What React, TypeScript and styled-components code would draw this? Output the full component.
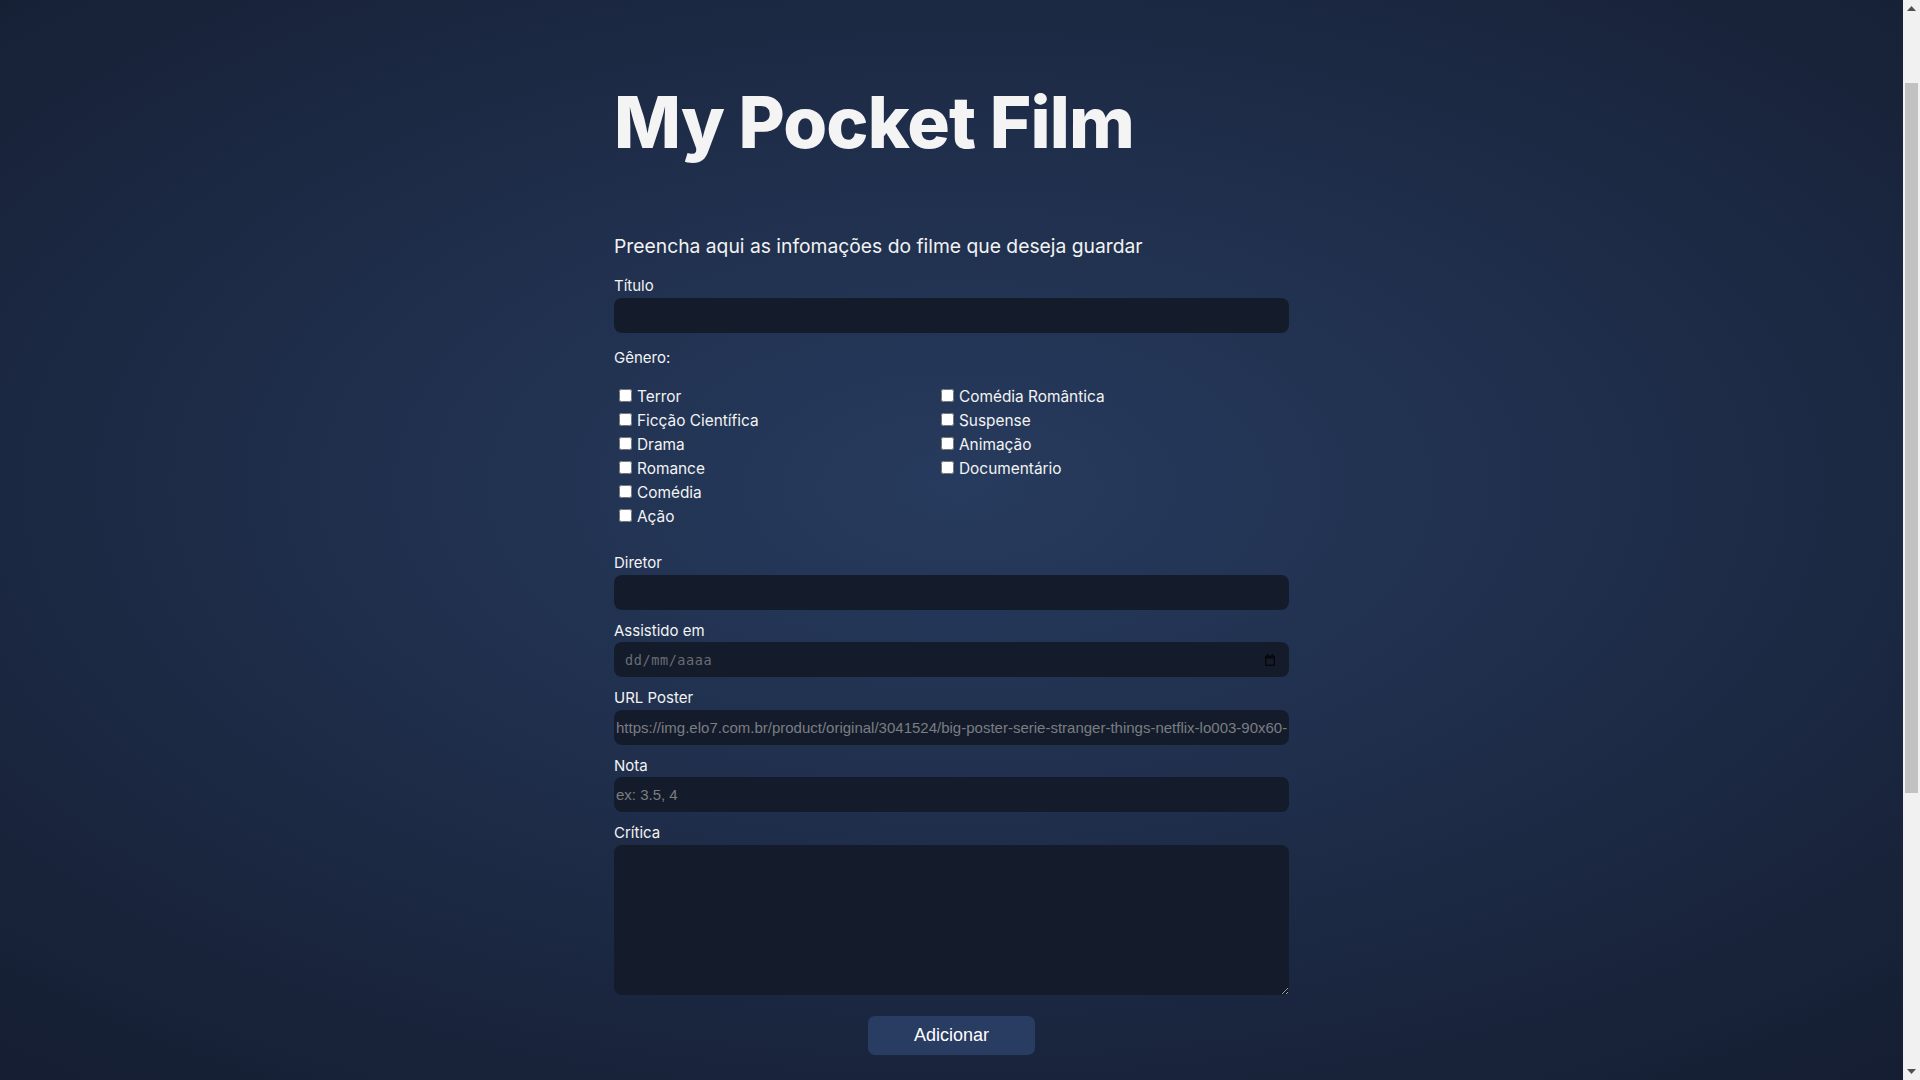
import React from "react";
import styled, { createGlobalStyle } from "styled-components";

const GlobalStyle = createGlobalStyle`
  html {
    background-color: #172238;
    background-image: radial-gradient(ellipse 75% 70% at 50% 45%, #273b5e 0%, #1f2e4b 45%, #151e32 100%);
    background-attachment: fixed;
  }
  body {
    margin: 0;
    font-family: Inter, "Noto Sans", sans-serif;
    color: #f3f3f3;
  }
`;

const Shell = styled.div`
  display: grid;
  grid-template-columns: 1fr 17px;
  min-height: 100vh;
`;

const Page = styled.main`
  padding: 80px 0 16px;
`;

const ScrollBar = styled.aside`
  display: flex;
  flex-direction: column;
  height: 100vh;
  background: #f1f1f1;
`;

const ScrollArrow = styled.div`
  flex: 0 0 17px;
  display: flex;
  align-items: center;
  justify-content: center;
`;

const ScrollTrack = styled.div`
  flex: 1;
  display: flex;
  flex-direction: column;
  padding: 66px 2px 270px;
`;

const ScrollThumb = styled.div`
  flex: 1;
  background: #c1c1c1;
`;

const Container = styled.div`
  width: 675px;
  margin: 0 auto;
`;

const Title = styled.h1`
  margin: 0;
  font-family: Inter, "Noto Sans", sans-serif;
  font-weight: 800;
  font-size: 71px;
  line-height: 84px;
  letter-spacing: -0.9px;
  color: #f4f4f5;
`;

const Subtitle = styled.p`
  margin: 68px 0 0;
  font-size: 19.3px;
  line-height: 28px;
  font-weight: 400;
  color: #f2f2f2;
`;

const Form = styled.form`
  margin-top: 15px;
`;

const Field = styled.div`
  display: flex;
  flex-direction: column;
  margin-bottom: 10px;
`;

const Label = styled.label`
  font-size: 15px;
  font-weight: 400;
  line-height: 22.5px;
  color: #f3f3f3;
`;

const GroupLabel = styled.div`
  margin-top: 14px;
  font-size: 15px;
  font-weight: 400;
  line-height: 22.5px;
  color: #f3f3f3;
`;

const CheckGrid = styled.div`
  display: grid;
  grid-template-columns: 322px 1fr;
  grid-auto-flow: column;
  grid-template-rows: repeat(6, 24px);
  margin: 16px 0 23px;
`;

const CheckItem = styled.label`
  display: block;
  font-size: 15.4px;
  line-height: 24px;
  font-weight: 400;
  color: #f3f3f3;
  white-space: nowrap;

  input {
    width: 13px;
    height: 13px;
    margin: 3px 5px 3px 5px;
  }
`;

const TextInput = styled.input<{ $mono?: boolean }>`
  box-sizing: border-box;
  width: 100%;
  height: 35px;
  border: none;
  border-radius: 8px;
  background: #141c2c;
  color: #e6e6e6;
  outline: none;
  padding: ${(p) => (p.$mono ? "0 30px 0 11px" : "0 2px")};
  font-family: ${(p) => (p.$mono ? '"DejaVu Sans Mono", monospace' : '"Liberation Sans", Arial, sans-serif')};
  font-size: ${(p) => (p.$mono ? "13.5px" : "15px")};
  letter-spacing: ${(p) => (p.$mono ? "0.6px" : "0")};

  &::placeholder {
    color: ${(p) => (p.$mono ? "#6a6d73" : "#7b7d82")};
  }
`;

const DateWrap = styled.div`
  position: relative;
`;

const CalendarIcon = styled.svg`
  position: absolute;
  right: 14px;
  top: 50%;
  transform: translateY(-50%);
  width: 10px;
  height: 12px;
`;

const TextArea = styled.textarea`
  box-sizing: border-box;
  display: block;
  width: 100%;
  height: 150px;
  border: none;
  border-radius: 8px;
  background: #141c2c;
  color: #e6e6e6;
  outline: none;
  padding: 2px;
  font-family: "Liberation Sans", Arial, sans-serif;
  font-size: 15px;
`;

const SubmitButton = styled.button`
  display: block;
  width: 167px;
  height: 39px;
  margin: 21px auto 0;
  border: none;
  border-radius: 7px;
  background: #293c62;
  color: #ffffff;
  font-family: "Liberation Sans", Arial, sans-serif;
  font-size: 18px;
  cursor: pointer;
`;

const leftGenres = ["Terror", "Ficção Científica", "Drama", "Romance", "Comédia", "Ação"];
const rightGenres = ["Comédia Romântica", "Suspense", "Animação", "Documentário"];

export default function App() {
  const genres = [...leftGenres, ...rightGenres];
  return (
    <>
      <GlobalStyle />
      <Shell>
        <Page>
          <Container>
            <Title>My Pocket Film</Title>
            <Subtitle>Preencha aqui as infomações do filme que deseja guardar</Subtitle>
            <Form onSubmit={(e) => e.preventDefault()}>
              <Field>
                <Label htmlFor="titulo">Título</Label>
                <TextInput id="titulo" type="text" />
              </Field>

              <GroupLabel>Gênero:</GroupLabel>
              <CheckGrid>
                {genres.map((g) => (
                  <CheckItem key={g}>
                    <input type="checkbox" />
                    {g}
                  </CheckItem>
                ))}
              </CheckGrid>

              <Field>
                <Label htmlFor="diretor">Diretor</Label>
                <TextInput id="diretor" type="text" />
              </Field>

              <Field>
                <Label htmlFor="data">Assistido em</Label>
                <DateWrap>
                  <TextInput id="data" type="text" $mono placeholder="dd/mm/aaaa" />
                  <CalendarIcon viewBox="0 0 10 12">
                    <rect x="2" y="0" width="1.6" height="2.5" fill="#07090d" />
                    <rect x="6.4" y="0" width="1.6" height="2.5" fill="#07090d" />
                    <rect x="0" y="1.5" width="10" height="10.5" rx="1" fill="#07090d" />
                    <rect x="1.4" y="4.6" width="7.2" height="6" fill="#141c2c" />
                  </CalendarIcon>
                </DateWrap>
              </Field>

              <Field>
                <Label htmlFor="url">URL Poster</Label>
                <TextInput
                  id="url"
                  type="text"
                  placeholder="https://img.elo7.com.br/product/original/3041524/big-poster-serie-stranger-things-netflix-lo003-90x60-cm.jpg"
                />
              </Field>

              <Field>
                <Label htmlFor="nota">Nota</Label>
                <TextInput id="nota" type="text" placeholder="ex: 3.5, 4" />
              </Field>

              <Field>
                <Label htmlFor="critica">Crítica</Label>
                <TextArea id="critica" />
              </Field>

              <SubmitButton type="submit">Adicionar</SubmitButton>
            </Form>
          </Container>
        </Page>
        <ScrollBar aria-hidden="true">
          <ScrollArrow>
            <svg width="9" height="5" viewBox="0 0 9 5">
              <path d="M0 5 L4.5 0 L9 5 Z" fill="#505050" />
            </svg>
          </ScrollArrow>
          <ScrollTrack>
            <ScrollThumb />
          </ScrollTrack>
          <ScrollArrow>
            <svg width="9" height="5" viewBox="0 0 9 5">
              <path d="M0 0 L4.5 5 L9 0 Z" fill="#505050" />
            </svg>
          </ScrollArrow>
        </ScrollBar>
      </Shell>
    </>
  );
}
